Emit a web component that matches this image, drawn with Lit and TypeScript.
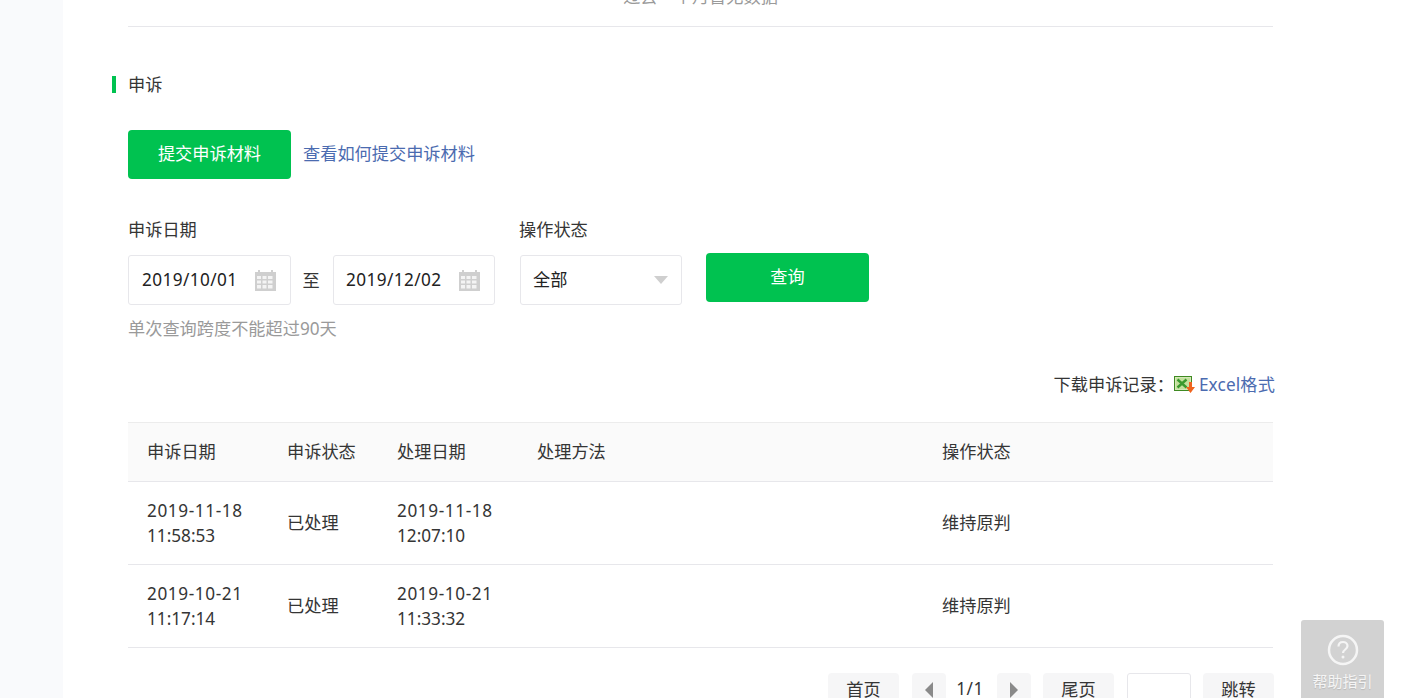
import { LitElement, html, css, svg } from "lit";
import { customElement } from "lit/decorators.js";

const rows = [
  ["2019-11-18", "11:58:53", "已处理", "2019-11-18", "12:07:10", "", "维持原判"],
  ["2019-10-21", "11:17:14", "已处理", "2019-10-21", "11:33:32", "", "维持原判"],
];

const calendar = svg`<svg class="cal" width="21" height="21" viewBox="0 0 21 21" aria-hidden="true">
  <path fill="#cfcfcf" d="M0 2h3V0h2v2h11V0h2v2h3v19H0z"/>
  <path fill="#f4f4f4" d="M2 6h4v3H2zM7.500 6h4v3h-4zM13 6h4.500v3H13zM2 10.500h4v3H2zM7.500 10.500h4v3h-4zM13 10.500h4.500v3H13zM2 15h4v3.500H2zM7.500 15h4v3.500h-4zM13 15h4.500v3.500H13z"/>
</svg>`;

const excel = svg`<svg width="21" height="17" viewBox="0 0 21 17" aria-hidden="true">
  <rect x="0.500" y="0.500" width="17" height="14" fill="#d4e8b8" stroke="#3f8a22"/>
  <rect x="2" y="2" width="14" height="11" fill="#c3e09c"/>
  <path d="M3.500 3.500l9 8M12.500 3.500l-9 8" stroke="#3a9a2e" stroke-width="2.400"/>
  <path d="M15 6h3v5h3l-4.500 6L12 11h3z" fill="#f0641e"/>
</svg>`;

@customElement("app-root")
export class AppRoot extends LitElement {
  static styles = css`
    :host {
      display: flex;
      position: relative;
      width: 1426px;
      height: 698px;
      overflow: hidden;
      background: #fff;
      color: #353535;
      font: 17.2px/25px "Noto Sans", "Noto Sans CJK SC", sans-serif;
    }
    .side { width: 63px; flex: none; background: #f9fafc; }
    .main { width: 1210px; flex: none; padding-left: 65px; box-sizing: border-box; }
    .top {
      width: 1145px; height: 27px; box-sizing: border-box;
      border-bottom: 1px solid #e7e7eb; overflow: hidden;
      text-align: center; color: #9a9a9a; line-height: 24px;
    }
    .top span { display: block; margin-top: -15px; }
    .title { display: flex; align-items: center; height: 17px; margin: 49px 0 0 -16px; gap: 12px; }
    .title i { width: 4px; height: 17px; background: #00c250; }
    .actions { display: flex; align-items: center; gap: 12px; margin-top: 37px; }
    .btn {
      width: 163px; height: 49px; display: flex; align-items: center; justify-content: center;
      background: #00c250; color: #fff; border-radius: 4px; padding-bottom: 2px; box-sizing: border-box;
    }
    .link { color: #4b6bb0; }
    .actions .link { margin-top: -3px; }
    .download .link { letter-spacing: 0.15px; }
    .filters { display: flex; margin-top: 38px; }
    .label { height: 25px; margin-bottom: 13px; }
    .dates { display: flex; align-items: center; }
    .box {
      width: 163px; height: 50px; box-sizing: border-box; border: 1px solid #e7e7eb; border-radius: 3px;
      display: flex; align-items: center; justify-content: space-between; padding: 0 14px 0 13px; color: #222;
    }
    .box span { margin-top: -2px; }
    .box .val { letter-spacing: 0.4px; }
    .to { width: 42px; text-align: center; margin-left: -1px; margin-right: 1px; }
    .box.second { width: 162px; padding-left: 12px; }
    .state { margin-left: 25px; }
    .state .label { margin-left: -1px; }
    .box.sel { width: 162px; padding: 0 13px 0 12px; }
    .arrow { width: 0; height: 0; border: 7px solid transparent; border-top: 8px solid #cfcfcf; border-bottom: 0; }
    .query { margin: 36px 0 0 24px; }
    .hint { color: #9a9a9a; margin-top: 11px; }
    .download {
      width: 1147px; display: flex; justify-content: flex-end; align-items: center;
      margin-top: 31px; height: 25px;
    }
    .download svg { margin: 0 4px 0 0; }
    table {
      width: 1145px; margin-top: 25px; table-layout: fixed; border-collapse: collapse;
      border-top: 1px solid #ececec;
    }
    th, td { text-align: left; font-weight: 400; padding: 0 0 0 20px; border-bottom: 1px solid #e7e7eb; }
    th { height: 57px; background: #fafafa; padding-bottom: 1px; }
    th.first { padding-left: 19px; }
    td { height: 80px; padding-bottom: 2px; }
    td.d { height: 81px; padding-bottom: 1px; }
    td.n { padding-left: 19px; }
    .stamp { letter-spacing: 0.6px; }
    .pager { display: flex; align-items: flex-start; width: 1146px; justify-content: flex-end; margin-top: 25px; }
    .pg {
      width: 71px; height: 50px; background: #f6f6f7; border-radius: 4px; flex: none;
      display: flex; justify-content: center; padding-top: 4px; box-sizing: border-box;
    }
    .pg.arr { width: 34px; align-items: flex-start; padding-top: 9px; }
    .tri { width: 0; height: 0; border: 8px solid transparent; border-left: 0; border-right: 8px solid #8a8a8a; }
    .tri.r { border-right: 0; border-left: 8px solid #8a8a8a; }
    .num { width: 51px; text-align: center; margin-top: 3px; padding-right: 3px; box-sizing: border-box; letter-spacing: 0.4px; }
    .input { width: 64px; height: 40px; border: 1px solid #e7e7eb; border-radius: 3px; flex: none; margin: 0 12px 0 13px; box-sizing: border-box; }
    .ml12 { margin-left: 12px; }
    .ml13 { margin-left: 13px; }
    .help {
      position: absolute; left: 1301px; top: 620px; width: 83px; height: 78px;
      background: #d2d2d2; border-radius: 3px 3px 0 0; color: #f5f5f5; font-size: 15px;
      display: flex; flex-direction: column; align-items: center; padding-top: 14px; box-sizing: border-box;
    }
    .help span { margin-top: 4px; line-height: 22px; text-shadow: 0 1px 1px rgba(0,0,0,.12); }
  `;

  render() {
    return html`
      <div class="side"></div>
      <div class="main">
        <div class="top"><span>过去一个月暂无数据</span></div>
        <div class="title"><i></i><span>申诉</span></div>
        <div class="actions">
          <div class="btn">提交申诉材料</div>
          <span class="link">查看如何提交申诉材料</span>
        </div>
        <div class="filters">
          <div>
            <div class="label">申诉日期</div>
            <div class="dates">
              <div class="box"><span class="val">2019/10/01</span>${calendar}</div>
              <div class="to">至</div>
              <div class="box second"><span class="val">2019/12/02</span>${calendar}</div>
            </div>
          </div>
          <div class="state">
            <div class="label">操作状态</div>
            <div class="box sel"><span>全部</span><i class="arrow"></i></div>
          </div>
          <div class="btn query">查询</div>
        </div>
        <div class="hint">单次查询跨度不能超过90天</div>
        <div class="download">
          <span>下载申诉记录：</span>${excel}<span class="link">Excel格式</span>
        </div>
        <table>
          <colgroup>
            <col style="width:139px" /><col style="width:110px" /><col style="width:140px" /><col style="width:405px" /><col />
          </colgroup>
          <thead>
            <tr><th class="first">申诉日期</th><th>申诉状态</th><th>处理日期</th><th>处理方法</th><th>操作状态</th></tr>
          </thead>
          <tbody>
            ${rows.map(
              (r) => html`<tr>
                <td class="d n"><span class="stamp">${r[0]}</span><br />${r[1]}</td>
                <td>${r[2]}</td>
                <td class="d"><span class="stamp">${r[3]}</span><br />${r[4]}</td>
                <td>${r[5]}</td>
                <td>${r[6]}</td>
              </tr>`
            )}
          </tbody>
        </table>
        <div class="pager">
          <div class="pg">首页</div>
          <div class="pg arr ml13"><i class="tri"></i></div>
          <div class="num">1/1</div>
          <div class="pg arr"><i class="tri r"></i></div>
          <div class="pg ml12">尾页</div>
          <div class="input"></div>
          <div class="pg">跳转</div>
        </div>
      </div>
      <div class="help">
        <svg width="32" height="32" viewBox="0 0 32 32" aria-hidden="true">
          <circle cx="16" cy="16" r="14" fill="none" stroke="#f5f5f5" stroke-width="2.500"/>
          <path d="M11.500 12.500c0-3 2-4.500 4.500-4.500s4.500 1.600 4.500 4c0 3.500-4.500 3.500-4.500 7" fill="none" stroke="#f5f5f5" stroke-width="2.200"/>
          <circle cx="16" cy="23" r="1.500" fill="#f5f5f5"/>
        </svg>
        <span>帮助指引</span>
      </div>
    `;
  }
}
